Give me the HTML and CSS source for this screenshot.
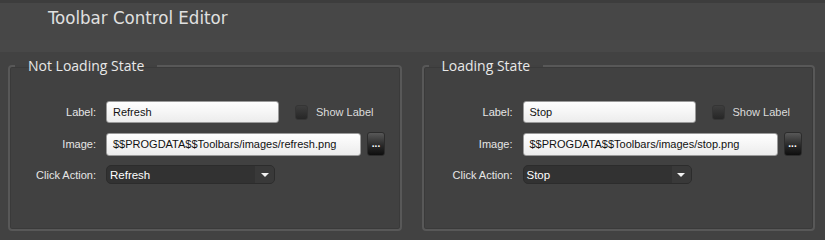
FILE: index.html
```html
<!DOCTYPE html>
<html lang="en">

<head>
    <meta charset="UTF-8">
    <title>Toolbar Control Editor</title>
    <link rel="stylesheet" href="styles.css">
</head>

<body>
    <div class="header">
        <div class="title">Toolbar Control Editor</div>
    </div>
    <div class="subbar"></div>
    <div class="panels">
        <fieldset class="state">
            <legend>Not Loading State</legend>
            <div class="row">
                <div class="label">Label:</div>
                <div class="input short">Refresh</div>
                <div class="check"></div>
                <div class="check-text">Show Label</div>
            </div>
            <div class="row">
                <div class="label">Image:</div>
                <div class="input long">$$PROGDATA$$Toolbars/images/refresh.png</div>
                <div class="browse">...</div>
            </div>
            <div class="row">
                <div class="label">Click Action:</div>
                <div class="select">
                    <span>Refresh</span>
                    <div class="arrow"></div>
                </div>
            </div>
        </fieldset>
        <fieldset class="state loading">
            <legend>Loading State</legend>
            <div class="row">
                <div class="label">Label:</div>
                <div class="input short">Stop</div>
                <div class="check"></div>
                <div class="check-text">Show Label</div>
            </div>
            <div class="row">
                <div class="label">Image:</div>
                <div class="input long">$$PROGDATA$$Toolbars/images/stop.png</div>
                <div class="browse">...</div>
            </div>
            <div class="row">
                <div class="label">Click Action:</div>
                <div class="select">
                    <span>Stop</span>
                    <div class="arrow"></div>
                </div>
            </div>
        </fieldset>
    </div>
</body>

</html>
```

FILE: styles.css
```css
body {
    margin: 0;
    background-color: #424242;
    font-family: 'Liberation Sans', Arial, sans-serif;
    font-size: 11px;
    color: #e6e6e6;
    width: 825px;
    height: 240px;
    overflow: hidden;
}

.header {
    height: 40px;
    background-color: #474747;
    border-top: 3px solid #3d3d3d;
    box-sizing: border-box;
    padding-left: 48px;
}

.title {
    font-family: 'DejaVu Sans Condensed', 'DejaVu Sans', sans-serif;
    font-size: 18.5px;
    color: #e0e0e0;
    line-height: 30px;
}

.subbar {
    height: 12px;
    background-color: #484848;
}

.panels {
    display: flex;
    gap: 20px;
    padding: 4px 10px 0 8px;
}

.state {
    flex: 1;
    margin: 0;
    height: 175px;
    box-sizing: border-box;
    padding: 26px 0 0 0;
    border: 2px solid #585858;
    border-radius: 4px;
    background-color: #414141;
    box-shadow: inset 0 0 0 1px #3a3a3a;
}

.state legend {
    font-family: 'Open Sans', sans-serif;
    font-size: 14px;
    color: #e8e8e8;
    margin-left: 5px;
    padding: 0 13px;
}

.row {
    display: flex;
    align-items: center;
    margin-bottom: 9px;
}

.label {
    width: 86px;
    text-align: right;
    margin-right: 10px;
}

.loading .label {
    width: 89px;
}

.input {
    height: 22px;
    box-sizing: border-box;
    border: 1px solid #9a9a9a;
    border-radius: 3px;
    background: linear-gradient(#ffffff, #ececec);
    color: #111;
    padding: 0 6px;
    line-height: 20px;
}

.short {
    width: 173px;
}

.long {
    width: 255px;
    height: 23px;
}

.check {
    width: 11px;
    height: 13px;
    margin-left: 16px;
    border-radius: 3px;
    background: linear-gradient(#3e3e3e, #262626);
    border: 1px solid #353535;
}

.check-text {
    margin-left: 8px;
    color: #dcdcdc;
}

.browse {
    width: 18px;
    height: 24px;
    margin-left: 6px;
    box-sizing: border-box;
    border: 1px solid #2c2c2c;
    border-radius: 3px;
    background: linear-gradient(#585858, #2a2a2a 55%, #0e0e0e);
    color: #fff;
    font-weight: bold;
    font-size: 10px;
    text-align: center;
    line-height: 22px;
}

.select {
    display: flex;
    align-items: center;
    justify-content: space-between;
    width: 169px;
    height: 19px;
    box-sizing: border-box;
    background-color: #323232;
    border: 1px solid #2c2c2c;
    border-radius: 5px;
    padding-left: 3px;
    color: #ffffff;
    font-size: 11.5px;
}

.arrow {
    width: 19px;
    height: 17px;
    background-color: #393939;
    border-radius: 0 4px 4px 0;
    display: flex;
    align-items: center;
    justify-content: center;
}

.arrow::after {
    content: '';
    border-left: 4px solid transparent;
    border-right: 4px solid transparent;
    border-top: 4px solid #f2f2f2;
}
```
